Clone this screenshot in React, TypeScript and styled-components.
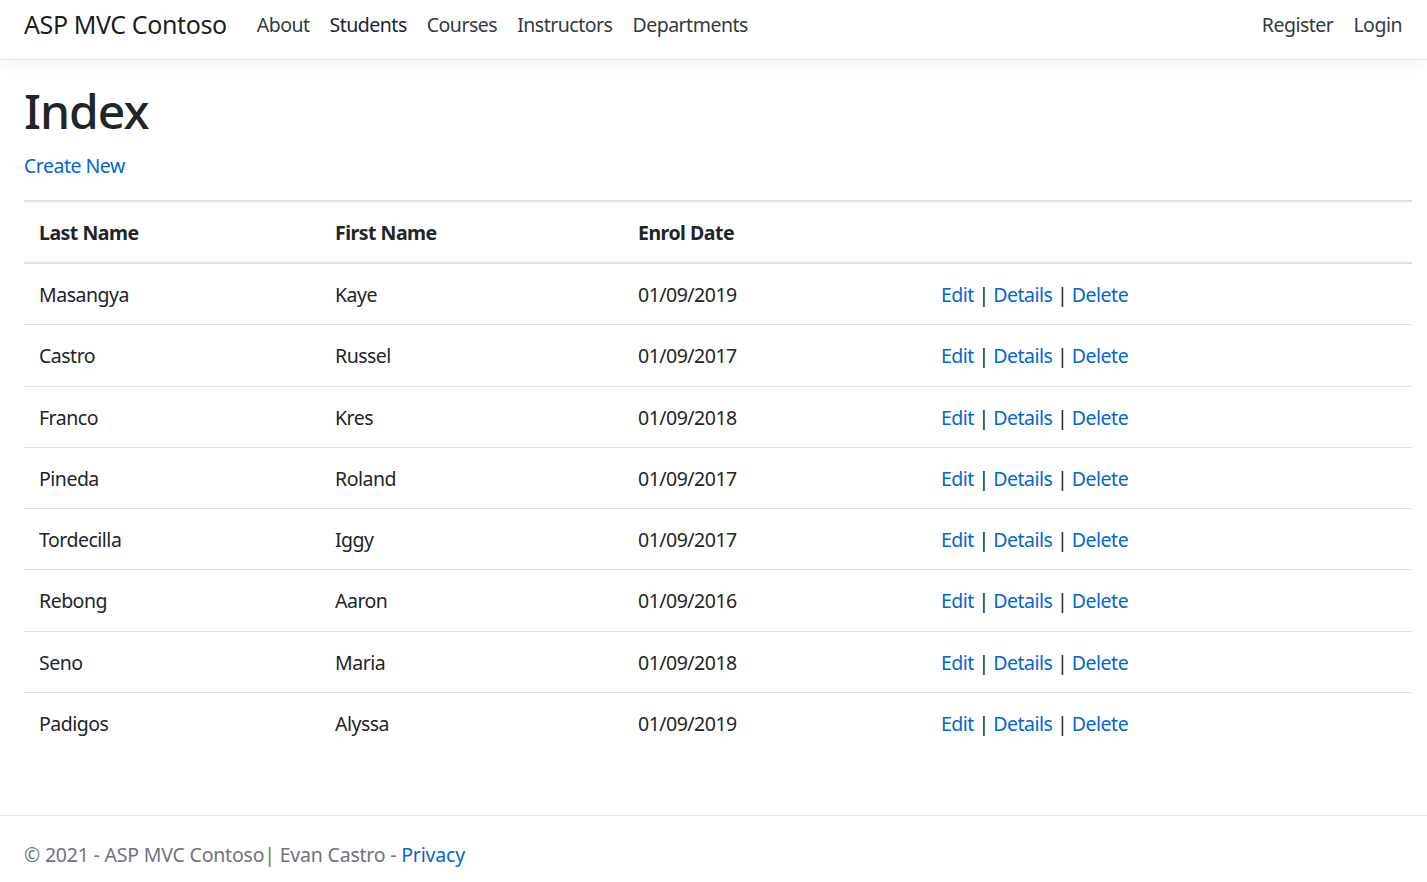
import React from "react";
import styled, { createGlobalStyle } from "styled-components";

const GlobalStyle = createGlobalStyle`
  html, body { margin: 0; padding: 0; height: 100%; }
  body {
    font-family: "Noto Sans", "Open Sans", sans-serif;
    font-size: 19.5px;
    letter-spacing: -0.5px;
    line-height: 30px;
    color: #212529;
    background: #fff;
    overflow: hidden;
  }
  #root { min-height: 100%; }
`;

const Page = styled.div`
  min-height: 100vh;
  display: flex;
  flex-direction: column;
`;

const Navbar = styled.header`
  box-sizing: border-box;
  height: 60px;
  border-bottom: 1px solid #e5e5e5;
  box-shadow: 0 5px 15px rgba(0, 0, 0, 0.05);
  background: #fff;
  display: flex;
  align-items: center;
  padding: 0 15px 10px 24px;
  margin-bottom: 21px;
`;

const Brand = styled.a`
  font-size: 25px;
  letter-spacing: -0.4px;
  line-height: 37px;
  color: rgba(0, 0, 0, 0.9);
  text-decoration: none;
  margin-right: 20px;
  white-space: nowrap;
`;

const NavList = styled.nav<{ $end?: boolean }>`
  display: flex;
  align-items: center;
  margin-left: ${(p) => (p.$end ? "auto" : "0")};
`;

const NavLink = styled.a<{ $active?: boolean }>`
  padding: 0 10px;
  color: ${(p) => (p.$active ? "#212529" : "#343a40")};
  text-decoration: none;
  white-space: nowrap;
`;

const Main = styled.main`
  flex: 1;
  padding: 0 15px 0 24px;
`;

const Title = styled.h1`
  margin: 0 0 10px;
  font-size: 48px;
  letter-spacing: -1px;
  font-weight: 500;
  line-height: 60px;
`;

const Para = styled.p`
  margin: 0 0 19px;
`;

const Link = styled.a`
  color: #0366d6;
  text-decoration: none;
`;

const Table = styled.table`
  width: 100%;
  border-collapse: collapse;
  margin-bottom: 20px;
`;

const Th = styled.th<{ $w?: number }>`
  text-align: left;
  font-weight: 700;
  padding: 16px 15px 14px;
  border-top: 2px solid #dee2e6;
  border-bottom: 2px solid #dee2e6;
  width: ${(p) => (p.$w ? `${p.$w}px` : "auto")};
  box-sizing: border-box;
`;

const Td = styled.td`
  padding: 16px 15px 14.25px;
  border-top: 1px solid #dee2e6;
  white-space: nowrap;
`;

const Sep = styled.span`
  color: #212529;
`;

const Footer = styled.footer`
  border-top: 1px solid #e5e5e5;
  padding: 24px 15px 12px 24px;
  color: #6c757d;
  letter-spacing: -0.2px;
  white-space: nowrap;
`;

const students = [
  ["Masangya", "Kaye", "01/09/2019"],
  ["Castro", "Russel", "01/09/2017"],
  ["Franco", "Kres", "01/09/2018"],
  ["Pineda", "Roland", "01/09/2017"],
  ["Tordecilla", "Iggy", "01/09/2017"],
  ["Rebong", "Aaron", "01/09/2016"],
  ["Seno", "Maria", "01/09/2018"],
  ["Padigos", "Alyssa", "01/09/2019"],
];

export default function App() {
  return (
    <>
      <GlobalStyle />
      <Page>
        <Navbar>
          <Brand href="#">ASP MVC Contoso</Brand>
          <NavList>
            <NavLink href="#">About</NavLink>
            <NavLink href="#" $active>Students</NavLink>
            <NavLink href="#">Courses</NavLink>
            <NavLink href="#">Instructors</NavLink>
            <NavLink href="#">Departments</NavLink>
          </NavList>
          <NavList $end>
            <NavLink href="#">Register</NavLink>
            <NavLink href="#">Login</NavLink>
          </NavList>
        </Navbar>
        <Main>
          <Title>Index</Title>
          <Para>
            <Link href="#">Create New</Link>
          </Para>
          <Table>
            <thead>
              <tr>
                <Th $w={296}>Last Name</Th>
                <Th $w={303}>First Name</Th>
                <Th $w={303}>Enrol Date</Th>
                <Th></Th>
              </tr>
            </thead>
            <tbody>
              {students.map(([last, first, date]) => (
                <tr key={last}>
                  <Td>{last}</Td>
                  <Td>{first}</Td>
                  <Td>{date}</Td>
                  <Td>
                    <Link href="#">Edit</Link> <Sep>|</Sep>{" "}
                    <Link href="#">Details</Link> <Sep>|</Sep>{" "}
                    <Link href="#">Delete</Link>
                  </Td>
                </tr>
              ))}
            </tbody>
          </Table>
        </Main>
        <Footer>
          © 2021 - ASP MVC Contoso| Evan Castro - <Link href="#">Privacy</Link>
        </Footer>
      </Page>
    </>
  );
}
